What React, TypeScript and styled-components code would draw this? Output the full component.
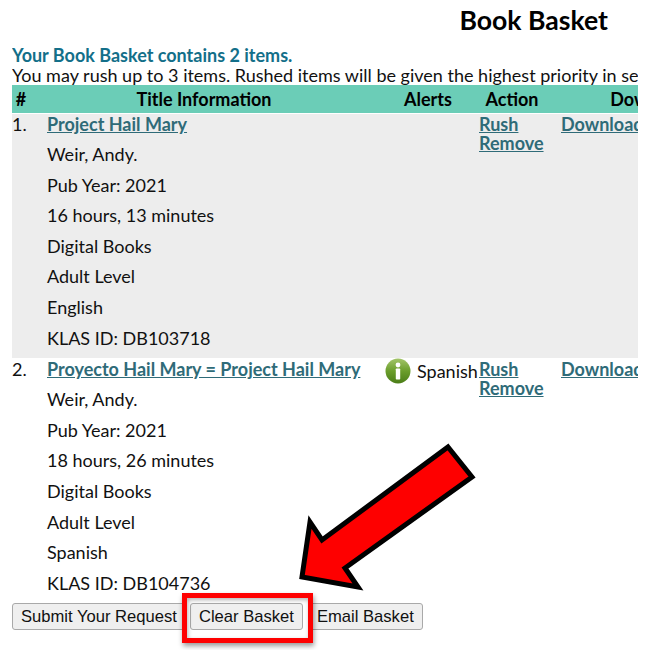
import styled, { createGlobalStyle } from 'styled-components';

const GlobalStyle = createGlobalStyle`
  html, body {
    margin: 0;
    padding: 0;
    background: #fff;
  }
  body {
    font-family: 'Lato', 'Liberation Sans', sans-serif;
    font-size: 18px;
    color: #111;
  }
`;

const Page = styled.div`
  position: relative;
  width: 650px;
  height: 650px;
  overflow: hidden;
`;

const Content = styled.div`
  width: 626px;
  margin-left: 12px;
  overflow: hidden;
`;

const Heading = styled.h1`
  margin: 0;
  padding: 4px 30px 0 0;
  height: 42px;
  box-sizing: border-box;
  text-align: right;
  font-size: 26.6px;
  line-height: 32px;
  font-weight: 700;
  color: #000;
`;

const Summary = styled.div`
  font-size: 18px;
  line-height: 20px;
  margin-top: 3px;
  font-weight: 700;
  color: #136f89;
`;

const Notice = styled.div`
  font-size: 18px;
  line-height: 19px;
  margin-top: 1px;
  white-space: nowrap;
`;

const Table = styled.table`
  table-layout: fixed;
  width: 796px;
  border-collapse: separate;
  border-spacing: 0 1px;
  margin-top: -1px;
`;

const HeadCell = styled.th<{ $shift?: number }>`
  background: #6bcdb7;
  height: 28px;
  padding: 0 ${(p) => p.$shift ?? 0}px 0 0;
  font-size: 18px;
  font-weight: 700;
  color: #000;
  text-align: center;
`;

const Row = styled.tr<{ $shaded?: boolean }>`
  background: ${(p) => (p.$shaded ? '#ededed' : '#fff')};
`;

const Cell = styled.td`
  padding: 0;
  vertical-align: top;
  font-size: 18px;
`;

const ActionCell = styled(Cell)`
  padding-top: 1px;
`;

const InfoLines = styled.div`
  padding-bottom: 5px;
`;

const InfoLine = styled.div`
  line-height: 30.6px;
`;

const TitleLink = styled.a`
  display: block;
  line-height: 20px;
  margin-bottom: 5px;
  font-weight: 700;
  color: #2f6b78;
  text-decoration: underline;
  white-space: nowrap;
`;

const ActionLink = styled.a`
  display: block;
  line-height: 19px;
  font-weight: 700;
  color: #2f6b78;
  text-decoration: underline;
`;

const Number = styled.div`
  line-height: 20px;
`;

const AlertBox = styled.div`
  display: flex;
  align-items: center;
  gap: 6px;
  height: 26px;
  margin-top: -1px;
  white-space: nowrap;
`;

const Buttons = styled.div`
  display: flex;
  margin: -1px 0 0 12px;
`;

const Button = styled.button<{ $gap: number }>`
  height: 27px;
  margin-right: ${(p) => p.$gap}px;
  padding: 0 8px;
  box-sizing: border-box;
  font-family: 'Liberation Sans', Arial, sans-serif;
  font-size: 16.6px;
  color: #111;
  background: #efefef;
  border: 1px solid #a9a9a9;
  border-radius: 3px;
`;

const Highlight = styled.div`
  position: absolute;
  left: 182px;
  top: 593px;
  width: 131px;
  height: 50px;
  box-sizing: border-box;
  border: 5px solid #fe0000;
  box-shadow: 1px 3px 5px rgba(0, 0, 0, 0.4), inset 1px 2px 4px rgba(0, 0, 0, 0.3);
`;

const ArrowSvg = styled.svg`
  position: absolute;
  left: 0;
  top: 0;
  pointer-events: none;
`;

const InfoIcon = () => (
  <svg width="26" height="26" viewBox="0 0 26 26">
    <defs>
      <linearGradient id="infoFill" x1="0" y1="0" x2="0" y2="1">
        <stop offset="0" stopColor="#a3c56a" />
        <stop offset="0.5" stopColor="#6b9e2c" />
        <stop offset="1" stopColor="#4b7d18" />
      </linearGradient>
    </defs>
    <circle cx="13" cy="13" r="12.5" fill="url(#infoFill)" />
    <circle cx="13" cy="7" r="2.4" fill="#fff" />
    <rect x="10.8" y="10.5" width="4.4" height="11" rx="0.8" fill="#fff" />
  </svg>
);

type Book = {
  number: string;
  title: string;
  details: string[];
  alert?: string;
};

const books: Book[] = [
  {
    number: '1.',
    title: 'Project Hail Mary',
    details: [
      'Weir, Andy.',
      'Pub Year: 2021',
      '16 hours, 13 minutes',
      'Digital Books',
      'Adult Level',
      'English',
      'KLAS ID: DB103718',
    ],
  },
  {
    number: '2.',
    title: 'Proyecto Hail Mary = Project Hail Mary',
    alert: 'Spanish',
    details: [
      'Weir, Andy.',
      'Pub Year: 2021',
      '18 hours, 26 minutes',
      'Digital Books',
      'Adult Level',
      'Spanish',
      'KLAS ID: DB104736',
    ],
  },
];

export default function App() {
  return (
    <Page>
      <GlobalStyle />
      <Content>
        <Heading>Book Basket</Heading>
        <Summary>Your Book Basket contains 2 items.</Summary>
        <Notice>
          You may rush up to 3 items. Rushed items will be given the highest priority in selecting
          your next books.
        </Notice>
        <Table>
          <colgroup>
            <col width="35" />
            <col width="338" />
            <col width="94" />
            <col width="82" />
            <col width="247" />
          </colgroup>
          <thead>
            <tr>
              <HeadCell $shift={17}>#</HeadCell>
              <HeadCell $shift={24}>Title Information</HeadCell>
              <HeadCell $shift={8}>Alerts</HeadCell>
              <HeadCell $shift={16}>Action</HeadCell>
              <HeadCell $shift={66}>Download</HeadCell>
            </tr>
          </thead>
          <tbody>
            {books.map((book, i) => (
              <Row key={book.number} $shaded={i === 0}>
                <Cell>
                  <Number>{book.number}</Number>
                </Cell>
                <Cell>
                  <InfoLines>
                    <TitleLink>{book.title}</TitleLink>
                    {book.details.map((line, j) => (
                      <InfoLine key={j}>{line}</InfoLine>
                    ))}
                  </InfoLines>
                </Cell>
                <Cell>
                  {book.alert && (
                    <AlertBox>
                      <InfoIcon />
                      {book.alert}
                    </AlertBox>
                  )}
                </Cell>
                <ActionCell>
                  <ActionLink>Rush</ActionLink>
                  <ActionLink>Remove</ActionLink>
                </ActionCell>
                <ActionCell>
                  <ActionLink>Download</ActionLink>
                </ActionCell>
              </Row>
            ))}
          </tbody>
        </Table>
      </Content>
      <Buttons>
        <Button $gap={4}>Submit Your Request</Button>
        <Button $gap={5}>Clear Basket</Button>
        <Button $gap={0}>Email Basket</Button>
      </Buttons>
      <Highlight />
      <ArrowSvg width="650" height="650" viewBox="0 0 650 650">
        <polygon
          points="448,447 472,477 345,568 358,587 302,577 310,522 322,540"
          fill="#fe0000"
          stroke="#000"
          strokeWidth="5"
        />
      </ArrowSvg>
    </Page>
  );
}
